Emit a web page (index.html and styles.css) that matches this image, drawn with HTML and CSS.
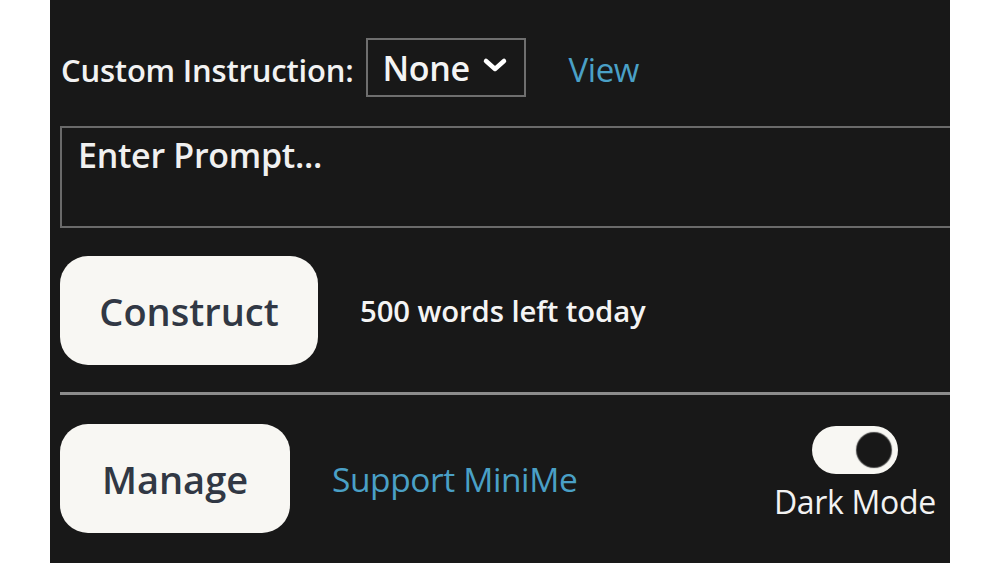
FILE: index.html
```html
<!DOCTYPE html>
<html>
<head>
<meta charset="utf-8">
<link rel="stylesheet" href="styles.css">
</head>
<body>
<div class="panel">
  <div class="row-instr">
    <span class="label">Custom Instruction:</span>
    <div class="select"><span>None</span>
      <svg class="chev" width="26" height="16" viewBox="0 0 26 16"><path d="M4 4 L13 12 L22 4" fill="none" stroke="#fff" stroke-width="4.5" stroke-linecap="round" stroke-linejoin="round"/></svg>
    </div>
    <a class="link view">View</a>
  </div>
  <div class="prompt">Enter Prompt...</div>
  <div class="row-construct">
    <button class="btn construct">Construct</button>
    <span class="words">500 words left today</span>
  </div>
  <div class="rule"></div>
  <div class="row-bottom">
    <button class="btn manage">Manage</button>
    <a class="link support">Support MiniMe</a>
    <div class="dark">
      <div class="toggle"><div class="knob"></div></div>
      <span class="dark-label">Dark Mode</span>
    </div>
  </div>
</div>
</body>
</html>
```
FILE: styles.css
```css
html, body { margin: 0; padding: 0; background: #fff; }
body { font-family: "Open Sans", "Noto Sans", sans-serif; color: #f2f2f2; }
.panel {
  width: 900px; height: 563px; margin: 0 auto; background: #181818;
  overflow: hidden; padding: 38px 0 0 10px; box-sizing: border-box;
}
.row-instr { display: flex; align-items: center; height: 59px; }
.label { font-size: 31px; font-weight: 600; letter-spacing: -0.2px; margin-left: 1px; margin-top: 4px; }
.select {
  margin-left: 13px; width: 160px; height: 59px; box-sizing: border-box;
  border: 2px solid #6e6e6e; display: flex; align-items: center; padding-left: 14px;
  font-size: 34px; font-weight: 600; letter-spacing: -0.3px; color: #f4f4f4;
}
.chev { margin-left: 12px; margin-top: -6px; }
.link { color: #4aa0c6; font-size: 33px; letter-spacing: -0.4px; }
.view { margin-left: 42px; margin-top: 4px; }
.prompt {
  margin-top: 29px; width: 1000px; height: 102px; box-sizing: border-box;
  border: 2px solid #6a6a6a; padding: 5px 0 0 16px; font-size: 34px; font-weight: 600;
  letter-spacing: -0.3px; color: #f0f0f0; line-height: 1.3;
}
.row-construct { display: flex; align-items: center; margin-top: 28px; }
.btn {
  background: #f8f7f3; border: none; border-radius: 28px; font-family: inherit;
  font-size: 38px; font-weight: 600; color: #313844; letter-spacing: 0px; padding: 0;
}
.construct { width: 258px; height: 109px; }
.words { margin-left: 42px; font-size: 29.3px; font-weight: 600; letter-spacing: -0.1px; color: #f4f4f4; }
.rule { margin-top: 27px; width: 1000px; height: 3px; background: #8c8c8c; }
.row-bottom { display: flex; align-items: center; margin-top: 29px; height: 109px; }
.manage { width: 230px; height: 109px; }
.support { margin-left: 42px; font-size: 33.5px; letter-spacing: -0.4px; }
.dark { margin-left: auto; margin-right: 14px; display: flex; flex-direction: column; align-items: center; align-self: flex-start; }
.toggle {
  width: 86px; height: 48px; border-radius: 24px; background: #f8f7f3; margin-top: 2px;
  display: flex; align-items: center; justify-content: flex-end; padding-right: 7px; box-sizing: border-box;
}
.knob { width: 34px; height: 34px; border-radius: 50%; background: #181818; box-shadow: 0 0 1px 1px #3a3a3a; }
.dark-label { margin-top: 6px; font-size: 32px; letter-spacing: -0.3px; color: #f2f2f2; }
```
